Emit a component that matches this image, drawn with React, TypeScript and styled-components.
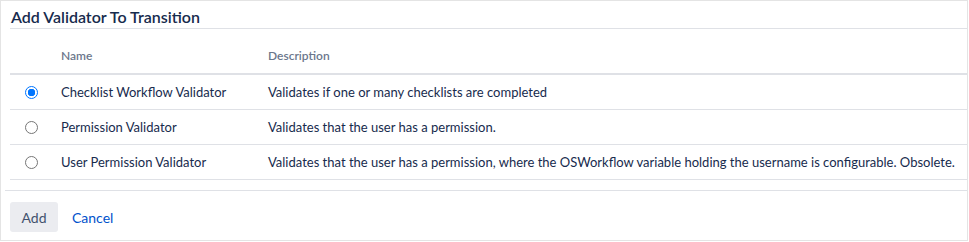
import React, { useState } from "react";
import styled, { createGlobalStyle } from "styled-components";

const Global = createGlobalStyle`
  html, body { margin: 0; padding: 0; background: #ffffff; }
  body { font-family: Lato, "Liberation Sans", Arial, sans-serif; color: #172b4d; }
`;

const Panel = styled.div`
  box-sizing: border-box;
  width: 968px;
  height: 241px;
  border: 1px solid #e4e4e4;
  display: flex;
  flex-direction: column;
`;

const Title = styled.h2`
  margin: 0 0 0 9px;
  padding: 6px 0 1px 1px;
  font-size: 16px;
  line-height: 20px;
  font-weight: 600;
  color: #172b4d;
  border-bottom: 1px solid #dfe1e6;
`;

const Table = styled.table`
  margin: 13px 0 0 9px;
  border-collapse: collapse;
  table-layout: fixed;
  width: calc(100% - 9px);
  font-size: 13px;
`;

const HeadCell = styled.th<{ $w?: number }>`
  text-align: left;
  font-size: 12px;
  font-weight: 600;
  color: #6b778c;
  padding: 0 0 10px 0;
  height: 21px;
  vertical-align: bottom;
  border-bottom: 2px solid #dfe1e6;
  width: ${(p) => (p.$w ? `${p.$w}px` : "auto")};
`;

const Row = styled.tr`
  border-bottom: 1px solid #dfe1e6;
`;

const Cell = styled.td`
  height: 34px;
  padding: 0;
  vertical-align: middle;
  color: #172b4d;
  white-space: nowrap;
`;

const RadioCell = styled(Cell)`
  padding-left: 15px;
`;

const Radio = styled.input.attrs({ type: "radio" })`
  appearance: none;
  margin: 0;
  width: 13px;
  height: 13px;
  border-radius: 50%;
  border: 1px solid #767676;
  box-sizing: border-box;
  display: block;
  background: #fff;
  &:checked {
    border: 1px solid #0075ff;
    background: radial-gradient(circle, #0075ff 0 3.5px, #fff 4px 100%);
  }
`;

const Footer = styled.div`
  margin: 10px 0 0 4px;
  border-top: 1px solid #dfe1e6;
  padding: 11px 0 0 5px;
  display: flex;
  align-items: center;
  gap: 14px;
`;

const Button = styled.button`
  font-family: inherit;
  font-size: 14px;
  color: #42526e;
  background: #ebecf0;
  border: none;
  border-radius: 3px;
  height: 30px;
  width: 48px;
  padding: 0;
  cursor: pointer;
`;

const Link = styled.a`
  font-size: 14px;
  color: #0052cc;
  text-decoration: none;
  cursor: pointer;
`;

const rows = [
  { name: "Checklist Workflow Validator", desc: "Validates if one or many checklists are completed" },
  { name: "Permission Validator", desc: "Validates that the user has a permission." },
  {
    name: "User Permission Validator",
    desc: "Validates that the user has a permission, where the OSWorkflow variable holding the username is configurable. Obsolete.",
  },
];

export default function App() {
  const [sel, setSel] = useState(0);
  return (
    <>
      <Global />
      <Panel>
        <Title>Add Validator To Transition</Title>
        <Table>
          <thead>
            <tr>
              <HeadCell $w={51} />
              <HeadCell $w={207}>Name</HeadCell>
              <HeadCell>Description</HeadCell>
            </tr>
          </thead>
          <tbody>
            {rows.map((r, i) => (
              <Row key={r.name}>
                <RadioCell>
                  <Radio name="validator" checked={sel === i} onChange={() => setSel(i)} />
                </RadioCell>
                <Cell>{r.name}</Cell>
                <Cell>{r.desc}</Cell>
              </Row>
            ))}
          </tbody>
        </Table>
        <Footer>
          <Button>Add</Button>
          <Link>Cancel</Link>
        </Footer>
      </Panel>
    </>
  );
}
